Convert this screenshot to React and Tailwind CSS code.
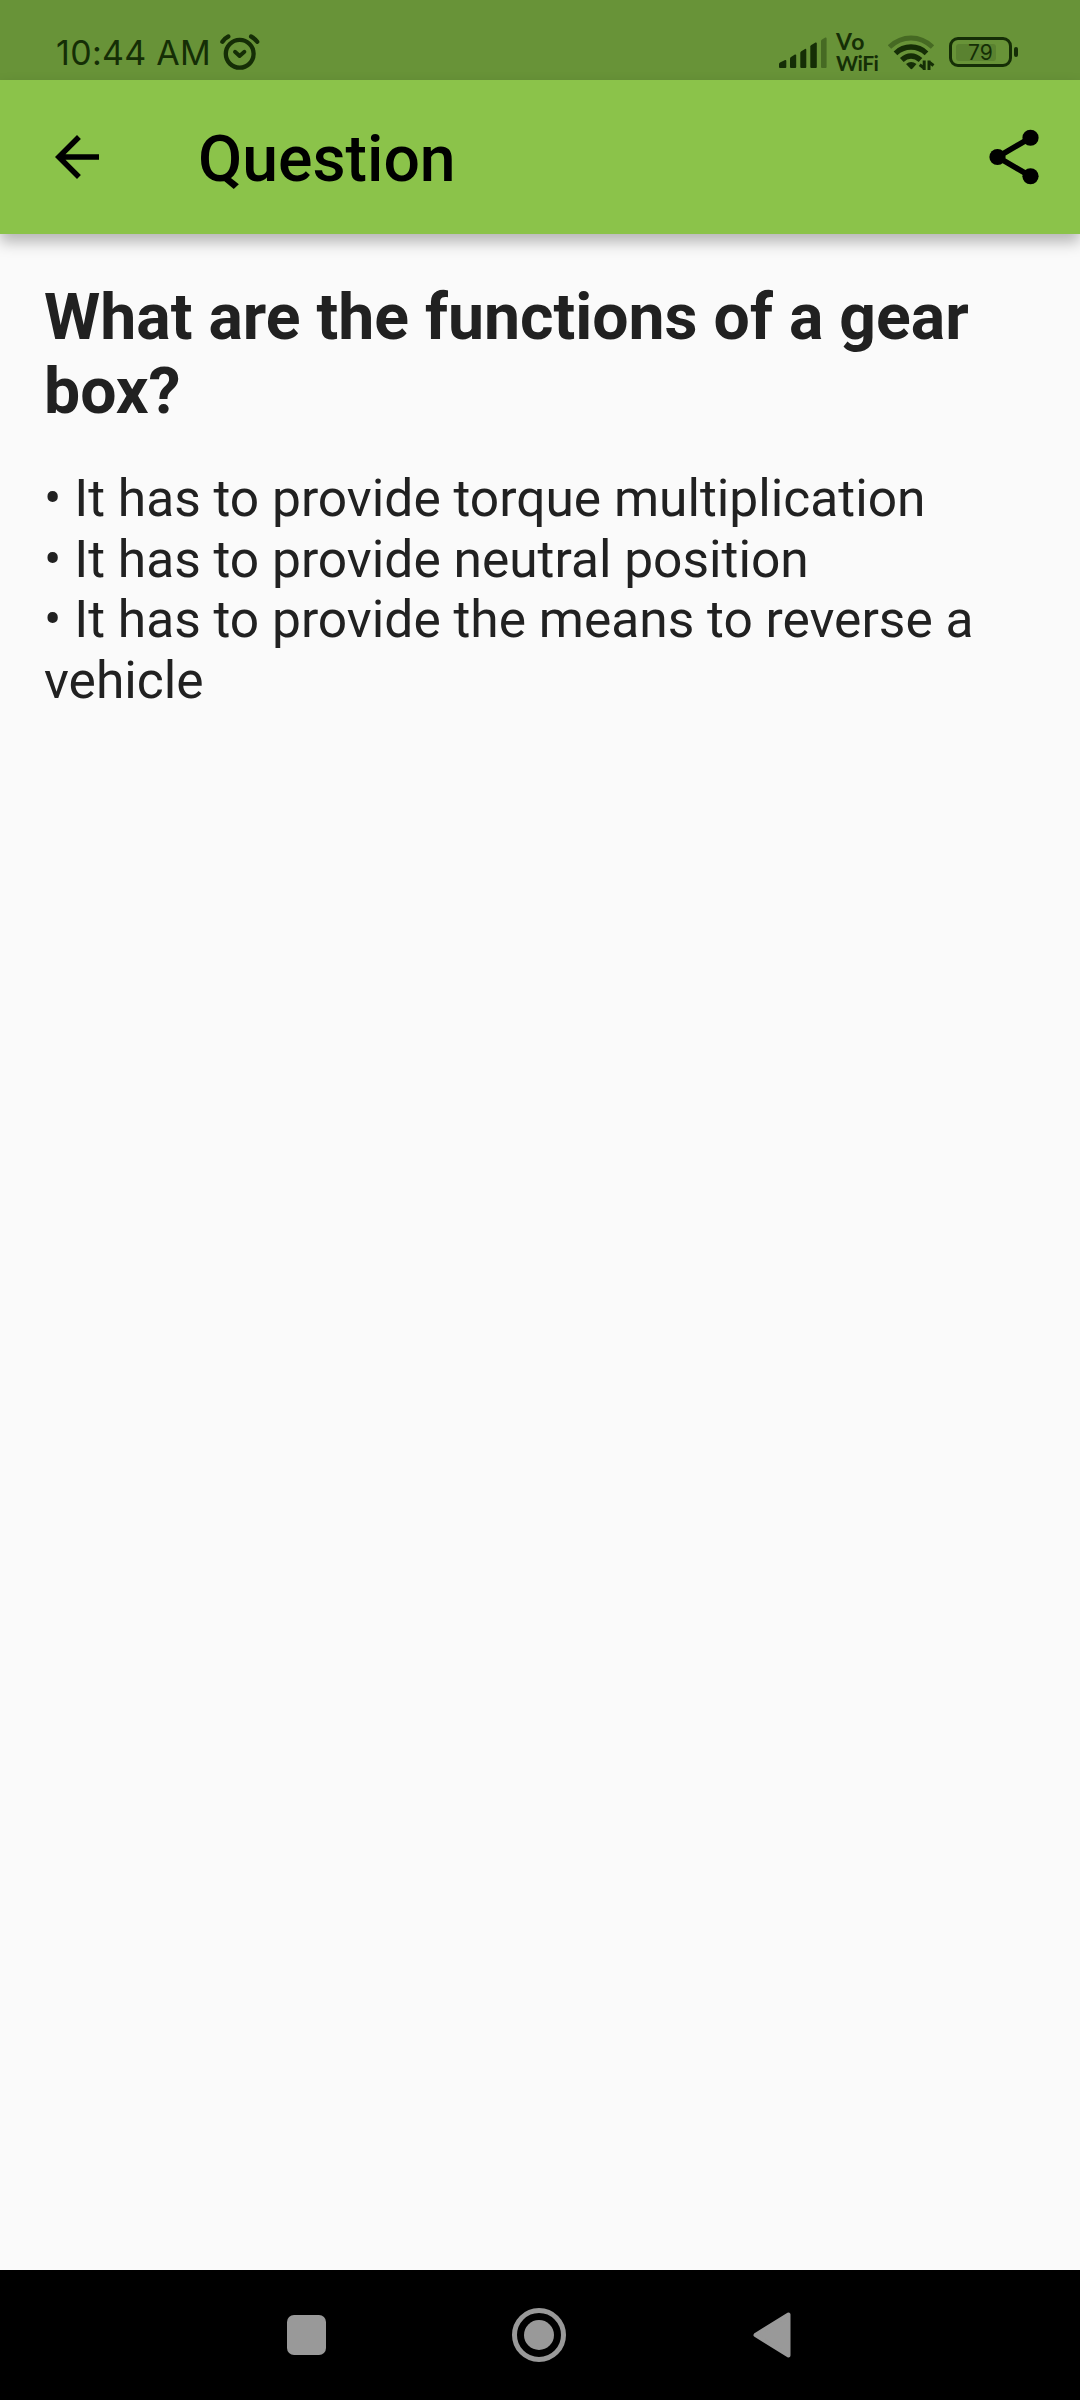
function AlarmIcon() {
  return (
    <svg className="ml-[11px] h-[38px] w-[40px]" viewBox="0 0 40 38" fill="none" stroke="#152e06" strokeWidth="4.3" strokeLinecap="round" strokeLinejoin="round">
      <circle cx="19.7" cy="20.8" r="13.9" />
      <path d="M2.4 8.8Q4.8 5.2 8.3 3.5M31.1 3.5Q34.6 5.2 37.2 8.8" />
      <path d="m15 18.8 4.6 4.2 4.800-4.200" strokeWidth="3.900" />
    </svg>
  );
}

function SignalIcon() {
  return (
    <svg className="h-[32px] w-[49px]" viewBox="0 0 49 32" fill="#152e06">
      <path d="M0 27q0-1 1-1.6l5.100-2.300q1.200-.3 1.200 1V30q0 1-1 1H1q-1 0-1-1z" />
      <path d="M11 21.500q0-1 1-1.600l3.900-2.300q1.300-.3 1.300 1V30q0 1-1 1H12q-1 0-1-1z" />
      <path d="M21.300 15.800q0-1 1-1.600l3.700-2.300q1.300-.3 1.300 1V30q0 1-1 1h-4q-1 0-1-1z" />
      <path d="M31.300 9.500q0-1 1-1.600l4.200-2.300q1.300-.3 1.300 1V30q0 1-1 1h-4.500q-1 0-1-1z" />
      <path d="M42 4q0-1 1-1.600L46.300.6Q47.600.3 47.600 1.600V30q0 1-1 1H43q-1 0-1-1z" opacity=".4" />
    </svg>
  );
}

function WifiIcon() {
  return (
    <svg className="h-[35px] w-[47px]" viewBox="0 0 47 35" fill="none" stroke="#152e06">
      <path d="M1.500 12Q11 3 23 3T44.500 12" strokeWidth="4.800" opacity=".4" />
      <path d="M7.500 18.300Q14 12 23 12T38.500 18.300" strokeWidth="5.300" />
      <path d="M13.800 25Q18 21 23 21T32.500 25" strokeWidth="5.300" />
      <path d="M18 29Q23 25 28.500 29l-4.200 4.800q-.9.800-1.800 0z" fill="#152e06" stroke="none" />
      <path d="M36.200 25.500v9.500M36.200 33.300l-4.500-3.500M41 35V25.500M41 27l4.500 3.500" strokeWidth="3" />
    </svg>
  );
}

function StatusBar() {
  return (
    <div className="flex h-[80px] items-start bg-[#689338] pt-[33px] text-[#152e06]">
      <span className="ml-[56px] mt-[1px] w-[153px] whitespace-nowrap font-['Inter'] text-[34px] leading-[38px] tracking-[0.3px]">10:44 AM</span>
      <AlarmIcon />
      <div className="ml-auto mt-[4px]"><SignalIcon /></div>
      <div className="ml-[8px] w-[41px] whitespace-nowrap font-['Lato'] font-bold">
        <div className="-mt-[2px] h-[21px] text-[23px] leading-[21px] tracking-[1px]">Vo</div>
        <div className="text-[21px] leading-[21px] tracking-[-0.5px]">WiFi</div>
      </div>
      <div className="ml-[11px] mt-[2px]"><WifiIcon /></div>
      <div className="ml-[14px] mt-[4px] flex h-[30px] w-[63px] items-center rounded-[9px] border-[3px] border-[#152e06] p-[4px]">
        <div className="h-[17px] w-[40px] whitespace-nowrap rounded-[3px] bg-[#5a8230] pl-[12px] font-['Inter'] text-[21px] leading-[17px]">79</div>
      </div>
      <div className="ml-[2px] mr-[62px] mt-[14px] h-[10px] w-[4px] rounded-[2px] bg-[#152e06]" />
    </div>
  );
}

function AppBar() {
  return (
    <header className="relative flex h-[154px] items-center bg-[#8bc34a] shadow-[0_8px_14px_rgba(0,0,0,0.28)]">
      <svg className="ml-[44px] size-[66px]" viewBox="0 0 24 24">
        <path d="M20 11H7.830l5.590-5.590L12 4l-8 8 8 8 1.410-1.410L7.830 13H20z" />
      </svg>
      <h1 className="ml-[88px] mt-[4px] text-[64.300px] font-medium leading-none text-black">Question</h1>
      <svg className="ml-auto mr-[33px] size-[66px]" viewBox="0 0 24 24">
        <path d="M18 5 6 12l12 7" fill="none" stroke="#000" strokeWidth="2" />
        <circle cx="18" cy="5" r="2.950" />
        <circle cx="6" cy="12" r="2.950" />
        <circle cx="18" cy="19" r="2.950" />
      </svg>
    </header>
  );
}

function NavigationBar() {
  return (
    <nav className="flex h-[130px] items-center bg-black">
      <div className="ml-[287px] h-[40px] w-[39px] rounded-[7px] bg-[#999]" />
      <div className="ml-[186px] flex size-[54px] items-center justify-center rounded-full border-[5px] border-[#999]">
        <div className="size-[30px] rounded-full bg-[#999]" />
      </div>
      <svg className="ml-[187px] h-[46px] w-[38px]" viewBox="0 0 38 46">
        <path d="M2.500 23 35.500 2.500v41z" fill="#999" stroke="#999" strokeWidth="4" strokeLinejoin="round" />
      </svg>
    </nav>
  );
}

const answers = [
  "• It has to provide torque multiplication",
  "• It has to provide neutral position",
  "• It has to provide the means to reverse a vehicle",
];

export default function App() {
  return (
    <div className="flex h-[2400px] w-[1080px] flex-col overflow-hidden bg-[#fafafa] font-['Roboto',sans-serif] text-[#212121]">
      <StatusBar />
      <AppBar />
      <main className="flex-1 px-[44px] pt-[46px]">
        <h2 className="text-[64.300px] font-bold leading-[74px]">What are the functions of a gear box?</h2>
        <div className="mt-[41px] text-[51.500px] leading-[60.600px]">
          {answers.map((answer) => <p key={answer}>{answer}</p>)}
        </div>
      </main>
      <NavigationBar />
    </div>
  );
}
